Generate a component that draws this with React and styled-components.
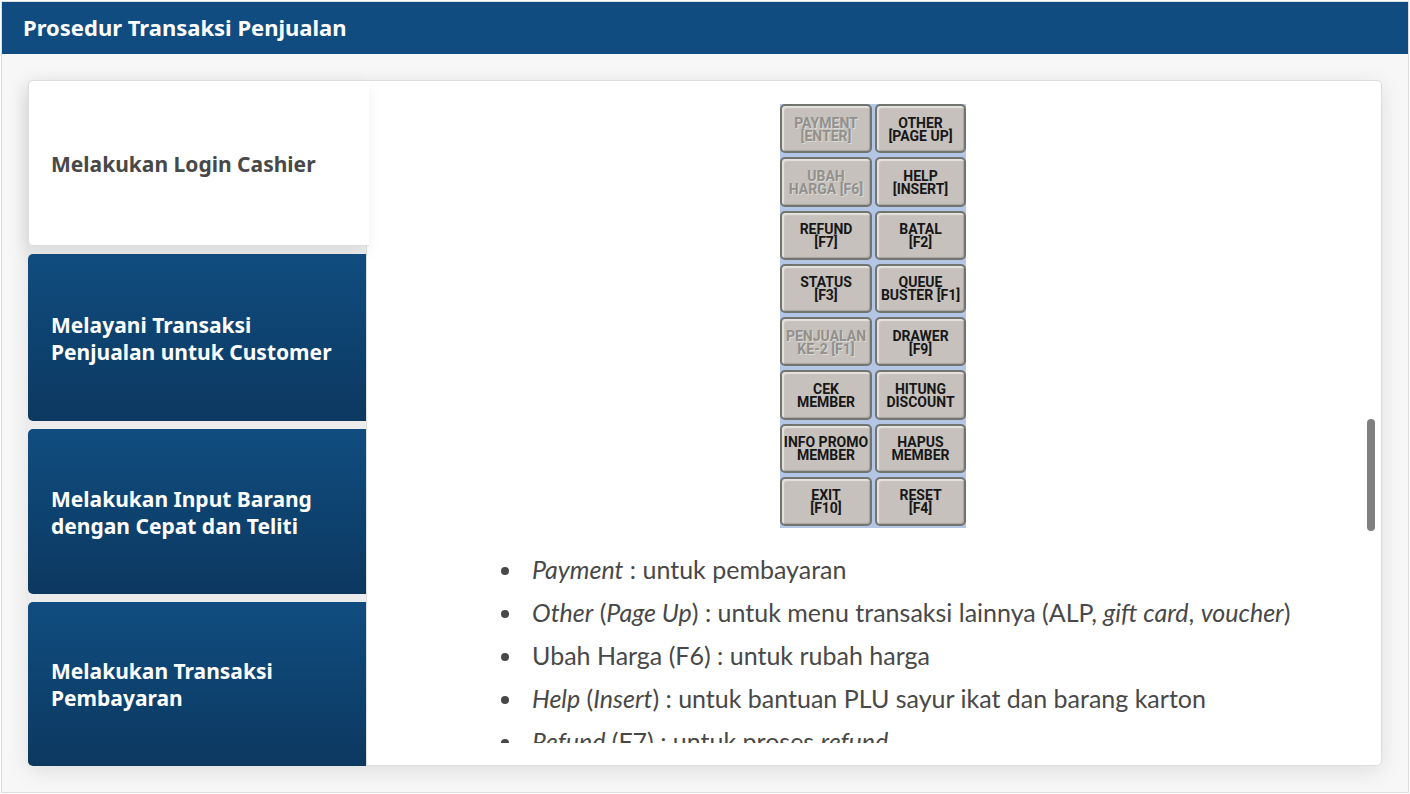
import React, { useState } from "react";
import styled, { createGlobalStyle } from "styled-components";

const GlobalStyle = createGlobalStyle`
  *, *::before, *::after { box-sizing: border-box; }
  body { margin: 0; background: #fff; }
`;

const Page = styled.div`
  height: 100vh;
  min-height: 640px;
  padding: 1px;
  display: flex;
`;

const Frame = styled.main`
  flex: 1;
  min-width: 0;
  display: flex;
  flex-direction: column;
  border: 1px solid #dcdddd;
  background: #f7f7f7;
  color: #484848;
  font-family: "Noto Sans", "Open Sans", sans-serif;
`;

const Header = styled.header`
  flex: none;
  height: 52px;
  padding: 0 21px 2px;
  display: flex;
  align-items: center;
  background: #104c7f;
  color: #fff;
`;

const Title = styled.h1`
  margin: 0;
  font-size: 22px;
  line-height: 28px;
  font-weight: 700;
`;

const Body = styled.div`
  flex: 1;
  min-height: 0;
  padding: 26px;
  display: flex;
`;

const Card = styled.section`
  flex: 1;
  min-width: 0;
  display: flex;
  border-radius: 5px;
  background: #ececec;
  box-shadow: 0 5px 22px rgba(0, 0, 0, 0.1);
`;

const TabList = styled.div`
  position: relative;
  z-index: 1;
  flex: none;
  width: 338px;
  display: grid;
  grid-template-rows: 166fr 167fr 165fr 164fr;
  gap: 8px;
`;

const Tab = styled.button`
  margin: 0 ${(p) => (p.$active ? "-3px" : "0")} 0 0;
  padding: 2px 24px 0 ${(p) => (p.$active ? "22px" : "23px")};
  border: ${(p) => (p.$active ? "1px solid #dcdddd" : "0")};
  border-right: 0;
  border-radius: 5px 0 0 5px;
  background: ${(p) => (p.$active ? "#fff" : "linear-gradient(#104c7f, #0f4a7b 15%, #0c3860)")};
  box-shadow: ${(p) => (p.$active ? "-3px 6px 18px rgba(0, 0, 0, 0.08)" : "none")};
  color: ${(p) => (p.$active ? "#484848" : "#fff")};
  font: inherit;
  font-size: 21px;
  line-height: 27px;
  font-weight: 700;
  text-align: left;
  cursor: pointer;
`;

const Panel = styled.div`
  flex: 1;
  min-width: 0;
  padding: 23px 6px 22px 12px;
  display: flex;
  border: 1px solid #dcdddd;
  border-radius: 0 5px 5px 0;
  background: #fff;
`;

const Content = styled.div`
  flex: 1;
  min-width: 0;
  overflow: hidden;
`;

const Keypad = styled.div`
  width: 186px;
  height: 424px;
  margin: 0 auto;
  padding-bottom: 2px;
  display: grid;
  grid-template-columns: 92px 91px;
  grid-auto-rows: 1fr;
  gap: 4px 3px;
  background: #b3c6e6;
`;

const Key = styled.button`
  padding: 2px 0 0;
  border: 2px solid #72746f;
  border-radius: 5px;
  background: #c6c1bc;
  box-shadow: inset 2px 2px 1px #e6e3df, inset -1px -1px 1px #aaa6a1;
  color: #171717;
  font: 700 14px/13px Roboto, "Liberation Sans", sans-serif;
  text-align: center;
  white-space: pre;

  &:disabled {
    color: #92908d;
    text-shadow: 1px 1px 0 #dedbd7;
  }
`;

const List = styled.ul`
  margin: 20px 0 0;
  padding: 0 0 0 145px;
  font-family: Lato, sans-serif;
  font-size: 25px;
  line-height: 43px;
`;

const Item = styled.li`
  padding-left: 8px;
  white-space: nowrap;
`;

const Track = styled.div`
  flex: none;
  width: 8px;
  display: flex;
  flex-direction: column;
`;

const Space = styled.div`
  flex: ${(p) => p.$share} 0 0;
`;

const Thumb = styled.div`
  flex: 112 0 0;
  border-radius: 4px;
  background: #808080;
`;

const tabs = [
  "Melakukan Login Cashier",
  "Melayani Transaksi Penjualan untuk Customer",
  "Melakukan Input Barang dengan Cepat dan Teliti",
  "Melakukan Transaksi Pembayaran",
];

const keys = [
  ["PAYMENT\n[ENTER]", true],
  ["OTHER\n[PAGE UP]"],
  ["UBAH\nHARGA [F6]", true],
  ["HELP\n[INSERT]"],
  ["REFUND\n[F7]"],
  ["BATAL\n[F2]"],
  ["STATUS\n[F3]"],
  ["QUEUE\nBUSTER [F1]"],
  ["PENJUALAN\nKE-2 [F1]", true],
  ["DRAWER\n[F9]"],
  ["CEK\nMEMBER"],
  ["HITUNG\nDISCOUNT"],
  ["INFO PROMO\nMEMBER"],
  ["HAPUS\nMEMBER"],
  ["EXIT\n[F10]"],
  ["RESET\n[F4]"],
];

export default function App() {
  const [active, setActive] = useState(0);
  return (
    <Page>
      <GlobalStyle />
      <Frame>
        <Header>
          <Title>Prosedur Transaksi Penjualan</Title>
        </Header>
        <Body>
          <Card>
            <TabList role="tablist" aria-orientation="vertical">
              {tabs.map((label, i) => (
                <Tab
                  key={label}
                  id={`tab-${i}`}
                  role="tab"
                  aria-selected={i === active}
                  aria-controls="panel"
                  $active={i === active}
                  onClick={() => setActive(i)}
                >
                  {label}
                </Tab>
              ))}
            </TabList>
            <Panel id="panel" role="tabpanel" aria-labelledby={`tab-${active}`}>
              <Content>
                <Keypad>
                  {keys.map(([label, disabled]) => (
                    <Key key={label} disabled={disabled}>{label}</Key>
                  ))}
                </Keypad>
                <List>
                  <Item><em>Payment</em> : untuk pembayaran</Item>
                  <Item>
                    <em>Other</em> (<em>Page Up</em>) : untuk menu transaksi lainnya (ALP, <em>gift card</em>, <em>voucher</em>)
                  </Item>
                  <Item>Ubah Harga (F6) : untuk rubah harga</Item>
                  <Item>
                    <em>Help</em> (<em>Insert</em>) : untuk bantuan PLU sayur ikat dan barang karton
                  </Item>
                  <Item><em>Refund</em> (F7) : untuk proses <em>refund</em></Item>
                </List>
              </Content>
              <Track>
                <Space $share={315} />
                <Thumb />
                <Space $share={212} />
              </Track>
            </Panel>
          </Card>
        </Body>
      </Frame>
    </Page>
  );
}
